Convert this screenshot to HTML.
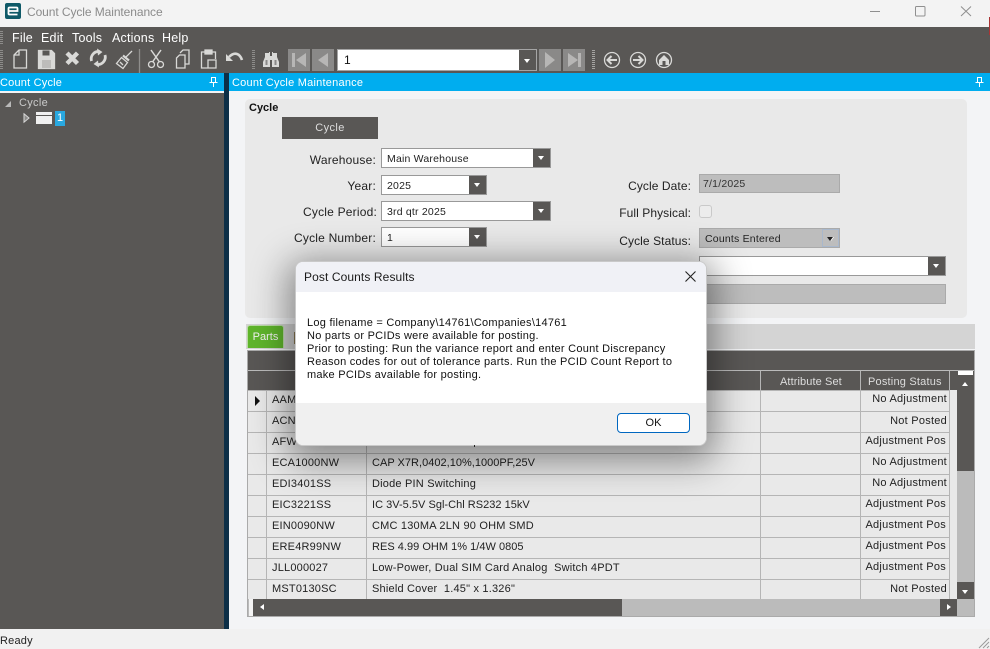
<!DOCTYPE html>
<html><head><meta charset="utf-8"><title>Count Cycle Maintenance</title>
<style>
html,body{margin:0;padding:0;background:#f3f4f6}
#p{position:relative;width:990px;height:649px;overflow:hidden;font-family:"Liberation Sans",sans-serif;font-size:11px;color:#222;background:#f3f4f6}
#p div,#p span.a{position:absolute;box-sizing:border-box;white-space:pre}
.m{top:31px;color:#fff;font-size:12.5px;line-height:15px;letter-spacing:.2px}
.lab{font-size:12px;line-height:14px;text-align:right;width:130px;color:#222;letter-spacing:.2px}
.lab.n{letter-spacing:.08px}
.f{background:#fff;border:1px solid #999;font-size:10.5px;line-height:20px;padding-left:5px;letter-spacing:.2px;color:#222}
.dd{top:0;right:0;bottom:0;width:17px;background:#595755}
.dd:after{content:"";position:absolute;left:5px;top:7px;border:3.5px solid transparent;border-top:4px solid #fff;border-bottom:0}
.g{background:#bdbdbd;border:1px solid #aaa}
.nb{top:49px;width:22px;height:22px;background:#8a8988}
.c{font-size:11px;line-height:14px;letter-spacing:.2px;color:#222}
.c.t{letter-spacing:.02px}
.hl{left:248px;width:702px;height:1px;background:#b5b5b5}
.vl{width:1px;background:#b5b5b5;top:371px;height:228px}
.r{right:43px;text-align:right;font-size:11px;line-height:14px;letter-spacing:.25px;color:#222}
svg{position:absolute;overflow:visible}
</style></head><body><div id="p">

<!-- Title bar -->
<div style="left:0;top:0;width:990px;height:27px;background:#f3f3f3"></div>
<div style="left:5px;top:3px;width:16px;height:16px;background:#0f5a68;border-radius:2px"></div>
<svg style="left:5px;top:3px" width="16" height="16"><path d="M3.500 8h9V5.500a1 1 0 0 0-1-1h-7a1 1 0 0 0-1 1v5a1 1 0 0 0 1 1h8" fill="none" stroke="#fff" stroke-width="1.800"/></svg>
<div style="left:27px;top:5px;font-size:12px;line-height:14px;color:#8b8b8b;letter-spacing:-.08px">Count Cycle Maintenance</div>
<svg style="left:780px;top:0" width="210" height="27" fill="none" stroke="#8f8f8f" stroke-width="1"><path d="M90 11.500h10"/><rect x="135.500" y="6.500" width="9.500" height="9.500" rx="1"/><path d="M181 6.500l10 9.500M191 6.500l-10 9.500"/></svg>
<div style="left:989px;top:17px;width:1px;height:10px;background:#a33"></div>

<!-- Menu and toolbar -->
<div style="left:0;top:27px;width:990px;height:46px;background:#595755"></div>
<div style="left:989px;top:27px;width:1px;height:8px;background:#a33"></div>
<div style="left:0;top:31px;width:3px;height:14px;background:repeating-linear-gradient(#8d8c8a 0 1px,transparent 1px 2px)"></div>
<div class="m" style="left:12px">File</div>
<div class="m" style="left:41px">Edit</div>
<div class="m" style="left:72px">Tools</div>
<div class="m" style="left:112px">Actions</div>
<div class="m" style="left:162px">Help</div>
<div style="left:0;top:50px;width:3px;height:20px;background:repeating-linear-gradient(#8d8c8a 0 1px,transparent 1px 2px)"></div>

<svg style="left:0;top:44px" width="250" height="29" fill="none" stroke="#d9d9d7" stroke-width="1.300">
<path d="M14 11l5-5h7.500v18H14z"/><path d="M14 11h5V6"/>
<path d="M38.500 6.500h13l3 3v15h-16z" fill="#d9d9d7"/><path d="M42.500 6.500h7v5h-7z" fill="#595755" stroke="none"/><path d="M42 16h9v8h-9z" fill="#bdbcba" stroke="none"/>
<path d="M67 9l10.500 10.500M77.500 9L67 19.500" stroke-width="4.400"/>
<path d="M91.500 17a7.500 7.500 0 0 1 8-9.500M105 11a7.500 7.500 0 0 1-8 9.500" stroke-width="2.800"/><path d="M97 4.500l5.500 3.500-4.500 3.500zM99 23.500l-5.500-3.500 4.500-3.500z" fill="#d9d9d7" stroke="none"/>
<path d="M132 7l-6 6"/><path d="M121.500 13.500l6 5-4.500 6-6.500-5z" fill="#595755"/><path d="M123 11.500l6 5" stroke-width="2.200"/><path d="M120 18l3 3"/>
<path d="M139.500 5v24" stroke="#8f8e8c"/>
<path d="M151 6l8.500 12M161 6l-8.500 12" stroke-width="1.500"/><circle cx="151.500" cy="20.500" r="3"/><circle cx="160.500" cy="20.500" r="3"/>
<path d="M180 9l3-3h6v14h-4"/><path d="M176.500 14l3-3h5.500v13h-8.500z"/>
<path d="M205 8h-3.500v16h6M212 8h3.500v7"/><path d="M205 6h7v4h-7z" fill="#d9d9d7"/><path d="M208 16h8v8h-8z"/>
<path d="M229 13c6-6 11-3 13 3" stroke-width="2.600"/><path d="M226 10v7h7z" fill="#d9d9d7" stroke="none"/>
</svg>
<div style="left:252px;top:50px;width:3px;height:20px;background:repeating-linear-gradient(#8d8c8a 0 1px,transparent 1px 2px)"></div>
<svg style="left:263px;top:50px" width="16" height="18" fill="#d9d9d7"><path d="M2 3h4v-1h1v15H0v-5l2-5zM14 3h-4v-1H9v15h7v-5l-2-5z"/><path d="M7 6h2v4H7z"/><path d="M2.500 10h2v5h-2zM11.500 10h2v5h-2z" fill="#8a8988"/></svg>

<div class="nb" style="left:288px"></div>
<svg style="left:288px;top:49px" width="22" height="22" fill="#b7b6b5"><path d="M4 4h3v14H4zM18 4v14L8 11z"/></svg>
<div class="nb" style="left:312px"></div>
<svg style="left:312px;top:49px" width="22" height="22" fill="#b7b6b5"><path d="M16 4v14L6 11z"/></svg>
<div style="left:337px;top:49px;width:200px;height:22px;background:#fff;border:1px solid #a5a5a5;font-size:12px;line-height:21px;padding-left:6px;color:#111">1</div>
<div style="left:519px;top:50px;width:17px;height:20px;background:#595755"></div>
<div style="left:524px;top:59px;width:0;height:0;border:3.500px solid transparent;border-top:4px solid #fff;border-bottom:0"></div>
<div class="nb" style="left:539px"></div>
<svg style="left:539px;top:49px" width="22" height="22" fill="#b7b6b5"><path d="M6 3v16l10-8z"/></svg>
<div class="nb" style="left:563px"></div>
<svg style="left:563px;top:49px" width="22" height="22" fill="#b7b6b5"><path d="M5 4v14l10-7zM15 4h3v14h-3z"/></svg>
<div style="left:592px;top:50px;width:3px;height:20px;background:repeating-linear-gradient(#a5a4a2 0 1px,transparent 1px 2px)"></div>
<svg style="left:600px;top:48px" width="80" height="24" fill="none" stroke="#d9d9d7" stroke-width="1.300">
<circle cx="12" cy="12" r="7.500"/><path d="M17 12H8M11.500 8L7.500 12l4 4" stroke-width="2"/>
<circle cx="38" cy="12" r="7.500"/><path d="M33 12h9M38.500 8l4 4-4 4" stroke-width="2"/>
<circle cx="64" cy="12" r="7.500"/><path d="M59 12l5-5 5 5v5H59z" fill="#d9d9d7" stroke="none"/><path d="M62.500 13h3v4h-3z" fill="#595755" stroke="none"/>
</svg>

<!-- Left panel -->
<div style="left:0;top:73px;width:224px;height:18px;background:#00adef"></div>
<div style="left:0;top:76px;color:#fff;font-size:11px;line-height:14px;letter-spacing:.2px">Count Cycle</div>
<svg style="left:209px;top:77px" width="9" height="11" fill="none" stroke="#fff"><path d="M2.500 .5h4v5h-4zM.5 5.500h8M4.500 6v4"/></svg>
<div style="left:0;top:93px;width:224px;height:536px;background:#595755"></div>
<div style="left:224px;top:73px;width:5px;height:556px;background:#0d2f47"></div>
<svg style="left:4px;top:100px" width="8" height="8" fill="#b9b9b9"><path d="M7 1v6H1z"/></svg>
<div style="left:19px;top:96px;color:#c9c9c9;font-size:11px;line-height:14px;letter-spacing:.3px">Cycle</div>
<svg style="left:23px;top:113px" width="7" height="10" fill="none" stroke="#d8d8d8"><path d="M1 .8L6 5 1 9.200z" fill="#8d8c8a"/></svg>
<div style="left:36px;top:112px;width:16px;height:12px;background:#f0f0f0"></div>
<div style="left:36px;top:115px;width:16px;height:1px;background:#595755"></div>
<div style="left:55px;top:111px;width:10px;height:15px;background:#29a8e0;color:#fff;font-size:11px;line-height:15px;text-align:center">1</div>

<!-- Right panel -->
<div style="left:229px;top:73px;width:761px;height:18px;background:#00adef"></div>
<div style="left:232px;top:76px;color:#fff;font-size:11px;line-height:14px;letter-spacing:.23px">Count Cycle Maintenance</div>
<svg style="left:975px;top:77px" width="9" height="11" fill="none" stroke="#fff"><path d="M2.500 .5h4v5h-4zM.5 5.500h8M4.500 6v4"/></svg>

<!-- Form -->
<div style="left:245px;top:99px;width:722px;height:219px;background:#e9e9e9;border-radius:5px"></div>
<div style="left:249px;top:101px;font-size:11px;line-height:14px;font-weight:bold;color:#111">Cycle</div>
<div style="left:282px;top:117px;width:96px;height:22px;background:#595755;color:#ddd;font-size:11px;line-height:22px;text-align:center;letter-spacing:.4px">Cycle</div>

<div class="lab" style="left:246px;top:153px">Warehouse:</div>
<div class="lab" style="left:246px;top:179px">Year:</div>
<div class="lab" style="left:247px;top:205px">Cycle Period:</div>
<div class="lab" style="left:246px;top:231px">Cycle Number:</div>
<div class="f" style="left:381px;top:148px;width:170px;height:20px">Main Warehouse<div class="dd"></div></div>
<div class="f" style="left:381px;top:175px;width:106px;height:20px">2025<div class="dd"></div></div>
<div class="f" style="left:381px;top:201px;width:170px;height:20px">3rd qtr 2025<div class="dd"></div></div>
<div class="f" style="left:381px;top:227px;width:106px;height:20px">1<div class="dd"></div></div>

<div class="lab n" style="left:561px;top:179px">Cycle Date:</div>
<div class="lab n" style="left:561px;top:206px">Full Physical:</div>
<div class="lab n" style="left:561px;top:234px">Cycle Status:</div>
<div class="g" style="left:699px;top:174px;width:141px;height:19px;font-size:10.500px;line-height:19px;padding-left:3px;color:#333;letter-spacing:.2px">7/1/2025</div>
<div style="left:699px;top:205px;width:13px;height:13px;border:1px solid #c9c9c9;border-radius:3px;background:#ececec"></div>
<div class="g" style="left:699px;top:228px;width:141px;height:20px;font-size:10.500px;line-height:21px;padding-left:5px;color:#222;letter-spacing:.2px">Counts Entered<div class="dd" style="width:17px;background:#bdbdbd;border:1px solid #a9b8cc"></div></div>
<div style="left:827px;top:237px;width:0;height:0;border:3px solid transparent;border-top:4px solid #222;border-bottom:0"></div>
<div class="f" style="left:699px;top:256px;width:247px;height:20px"><div class="dd"></div></div>
<div class="g" style="left:699px;top:284px;width:247px;height:20px"></div>

<!-- Tabs -->
<div style="left:246px;top:324px;width:729px;height:25px;background:#d4d4d4"></div>
<div style="left:247px;top:325px;width:37px;height:23px;background:#5fb52c;border:1px solid #b9dca4;border-bottom:0;border-radius:3px 3px 0 0;color:#f2f2f2;font-size:11px;line-height:22px;text-align:center">Parts</div>
<div style="left:294px;top:332px;width:2px;height:12px;background:#8a7a55"></div>

<!-- Grid -->
<div style="left:247px;top:350px;width:728px;height:267px;background:#e9e9e9;border:1px solid #aaa"></div>
<div style="left:248px;top:351px;width:726px;height:19px;background:#595755"></div>
<div style="left:248px;top:371px;width:709px;height:19px;background:#595755"></div>
<div style="left:248px;top:370px;width:726px;height:1px;background:#bbb"></div>
<div style="left:248px;top:390px;width:702px;height:1px;background:#b5b5b5"></div>
<div style="left:780px;top:375px;color:#ddd;font-size:11px;line-height:14px;letter-spacing:.1px">Attribute Set</div>
<div style="left:868px;top:375px;color:#ddd;font-size:11px;line-height:14px;letter-spacing:.2px">Posting Status</div>

<div class="hl" style="top:411px"></div><div class="hl" style="top:432px"></div><div class="hl" style="top:453px"></div><div class="hl" style="top:474px"></div><div class="hl" style="top:495px"></div><div class="hl" style="top:516px"></div><div class="hl" style="top:537px"></div><div class="hl" style="top:558px"></div><div class="hl" style="top:579px"></div>
<div class="vl" style="left:266px;top:390px;height:209px"></div><div class="vl" style="left:366px;top:390px;height:209px"></div><div class="vl" style="left:760px"></div><div class="vl" style="left:860px"></div><div class="vl" style="left:949px"></div>
<div style="left:255px;top:396px;width:0;height:0;border:5px solid transparent;border-left:5px solid #111;border-right:0"></div>

<div class="c" style="left:272px;top:393px">AAM</div>
<div class="c" style="left:272px;top:414px">ACN</div>
<div class="c" style="left:272px;top:435px">AFW</div>
<div class="c" style="left:272px;top:456px">ECA1000NW</div><div class="c t" style="left:372px;top:456px">CAP X7R,0402,10%,1000PF,25V</div>
<div class="c" style="left:272px;top:477px">EDI3401SS</div><div class="c" style="left:372px;top:477px">Diode PIN Switching</div>
<div class="c" style="left:272px;top:498px">EIC3221SS</div><div class="c t" style="left:372px;top:498px">IC 3V-5.5V Sgl-Chl RS232 15kV</div>
<div class="c" style="left:272px;top:519px">EIN0090NW</div><div class="c" style="left:372px;top:519px">CMC 130MA 2LN 90 OHM SMD</div>
<div class="c" style="left:272px;top:540px">ERE4R99NW</div><div class="c t" style="left:372px;top:540px">RES 4.99 OHM 1% 1/4W 0805</div>
<div class="c" style="left:272px;top:561px">JLL000027</div><div class="c" style="left:372px;top:561px">Low-Power, Dual SIM Card Analog  Switch 4PDT</div>
<div class="c" style="left:272px;top:582px">MST0130SC</div><div class="c" style="left:372px;top:582px">Shield Cover  1.45" x 1.326"</div>

<div class="r" style="top:392px">No Adjustment</div>
<div class="r" style="top:414px">Not Posted</div>
<div class="r" style="top:434px;right:44px">Adjustment Pos</div>
<div class="r" style="top:455px">No Adjustment</div>
<div class="r" style="top:476px">No Adjustment</div>
<div class="r" style="top:497px;right:44px">Adjustment Pos</div>
<div class="r" style="top:518px;right:44px">Adjustment Pos</div>
<div class="r" style="top:539px;right:44px">Adjustment Pos</div>
<div class="r" style="top:560px;right:44px">Adjustment Pos</div>
<div class="r" style="top:582px">Not Posted</div>

<!-- Vertical scrollbar -->
<div style="left:957px;top:371px;width:17px;height:100px;background:#595755"></div>
<div style="left:958px;top:371px;width:15px;height:4px;background:#fff"></div>
<div style="left:962px;top:382px;width:0;height:0;border:3.500px solid transparent;border-bottom:4px solid #fff;border-top:0"></div>
<div style="left:957px;top:471px;width:17px;height:111px;background:#bbb"></div>
<div style="left:957px;top:582px;width:17px;height:17px;background:#595755"></div>
<div style="left:962px;top:590px;width:0;height:0;border:3.500px solid transparent;border-top:4px solid #fff;border-bottom:0"></div>
<!-- Horizontal scrollbar -->
<div style="left:248px;top:599px;width:726px;height:17px;background:#bbb"></div>
<div style="left:249px;top:599px;width:4px;height:17px;background:#f3f3f3"></div>
<div style="left:253px;top:599px;width:369px;height:17px;background:#595755"></div>
<div style="left:260px;top:604px;width:0;height:0;border:3.500px solid transparent;border-right:4px solid #fff;border-left:0"></div>
<div style="left:940px;top:599px;width:17px;height:17px;background:#595755"></div>
<div style="left:947px;top:604px;width:0;height:0;border:3.500px solid transparent;border-left:4px solid #fff;border-right:0"></div>

<!-- Status bar -->
<div style="left:0;top:629px;width:990px;height:20px;background:#f1f1f1"></div>
<div style="left:0;top:635px;font-size:11px;line-height:13px;color:#222;letter-spacing:.2px">Ready</div>
<svg style="left:978px;top:637px" width="12" height="12" stroke="#9a9a9a" fill="none"><path d="M11 1L1 11M11 5l-6 6M11 9l-2 2"/></svg>

<!-- Dialog -->
<div style="left:295px;top:261px;width:412px;height:185px;background:#fff;border:1px solid #c9c9c9;border-radius:8px;overflow:hidden;box-shadow:0 8px 36px 8px rgba(0,0,0,.42)">
 <div style="left:0;top:0;width:410px;height:30px;background:#f0f1f6"></div>
 <div style="left:0;top:141px;width:410px;height:42px;background:#f0f0f0"></div>
 <div style="left:8px;top:8px;font-size:12px;line-height:15px;color:#1a1a1a;letter-spacing:.1px">Post Counts Results</div>
 <div style="left:11px;top:55px;font-size:11px;line-height:13px;color:#111;letter-spacing:.26px">Log filename = Company\14761\Companies\14761
No parts or PCIDs were available for posting.
Prior to posting: Run the variance report and enter Count Discrepancy
Reason codes for out of tolerance parts. Run the PCID Count Report to
make PCIDs available for posting.</div>
 <div style="left:321px;top:151px;width:73px;height:20px;background:#fff;border:1.500px solid #0067c0;border-radius:4px;font-size:11px;line-height:19px;text-align:center;color:#111">OK</div>
</div>
<svg style="left:684px;top:270px" width="13" height="13" fill="none" stroke="#222" stroke-width="1.100"><path d="M1.500 1.500l10 10M11.500 1.500l-10 10"/></svg>
<div style="left:474px;top:445px;width:1px;height:2px;background:#222"></div>

</div></body></html>
